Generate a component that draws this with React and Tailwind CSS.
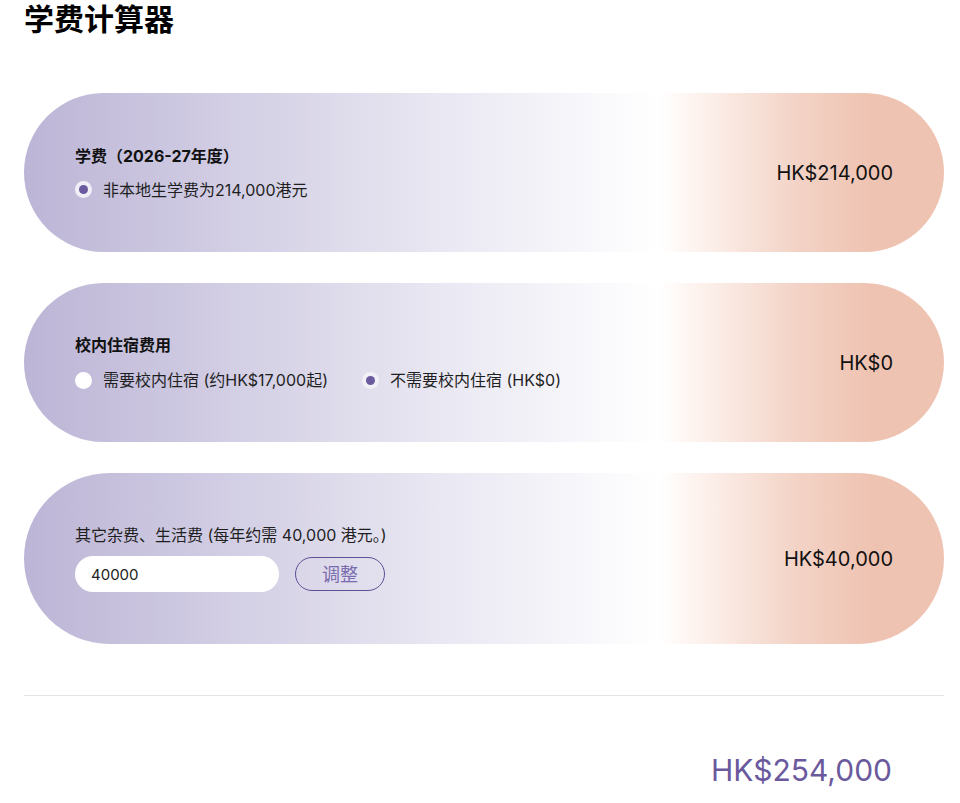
import React, { useState } from 'react';

const FONT = "font-['Inter','Noto_Sans_CJK_SC',sans-serif]";

// Card background: lavender -> white -> peach
const CARD =
  'flex items-center justify-between rounded-full px-[51px] bg-[linear-gradient(90deg,#bcb5d6_0%,#e9e7f2_45%,#ffffff_69%,#fdf3ef_73%,#f3d3c6_84%,#efc3b2_92%,#efc3b2_100%)]';

function Radio({ checked, label, onClick }) {
  return (
    <button type="button" onClick={onClick} className="flex items-center gap-[11px] h-5 text-[16px] text-[#1f1f1f]">
      <span
        className={`flex items-center justify-center w-[17px] h-[17px] rounded-full ${
          checked ? 'bg-[#f2f0f7]' : 'bg-white'
        }`}
      >
        {checked && <span className="w-[9px] h-[9px] rounded-full bg-[#6b5b9e]" />}
      </span>
      <span>{label}</span>
    </button>
  );
}

export default function App() {
  const [dorm, setDorm] = useState(false);
  const [other, setOther] = useState('40000');
  const [applied, setApplied] = useState(40000);

  const tuition = 214000;
  const dormFee = dorm ? 17000 : 0;
  const total = tuition + dormFee + applied;
  const fmt = (n) => 'HK$' + n.toLocaleString('en-US');

  return (
    <div className={`${FONT} bg-white min-h-screen pl-6 pr-4 text-[#111]`}>
      <h1 className="text-[30px] leading-[38px] font-bold text-black">学费计算器</h1>

      <div className="mt-[55px] flex flex-col gap-[31px]">
        {/* tuition */}
        <div className={`${CARD} h-[159px]`}>
          <div className="flex flex-col">
            <div className="text-[16px] leading-5 font-bold mb-[14px]">学费（2026-27年度）</div>
            <Radio checked label="非本地生学费为214,000港元" />
          </div>
          <div className="text-[20px] text-[#111]">{fmt(tuition)}</div>
        </div>

        {/* accommodation */}
        <div className={`${CARD} h-[159px]`}>
          <div className="flex flex-col">
            <div className="text-[16px] leading-5 font-bold mb-[15px]">校内住宿费用</div>
            <div className="flex items-center gap-[34px]">
              <Radio checked={dorm} onClick={() => setDorm(true)} label="需要校内住宿 (约HK$17,000起)" />
              <Radio checked={!dorm} onClick={() => setDorm(false)} label="不需要校内住宿 (HK$0)" />
            </div>
          </div>
          <div className="text-[20px] text-[#111]">{fmt(dormFee)}</div>
        </div>

        {/* other */}
        <div className={`${CARD} h-[171px]`}>
          <div className="flex flex-col">
            <div className="text-[16px] leading-5 mb-[11px] text-[#1f1f1f]">其它杂费、生活费 (每年约需 40,000 港元。)</div>
            <div className="flex items-center gap-4">
              <input
                value={other}
                onChange={(e) => setOther(e.target.value)}
                className="w-[204px] h-9 rounded-full bg-white px-4 text-[15px] text-[#222] outline-none"
              />
              <button
                type="button"
                onClick={() => setApplied(Number(other) || 0)}
                className="w-[90px] h-[34px] rounded-full border-[1.5px] border-[#5f5096] text-[18px] text-[#7a6daf]"
              >
                调整
              </button>
            </div>
          </div>
          <div className="text-[20px] text-[#111]">{fmt(applied)}</div>
        </div>
      </div>

      <div className="mt-[51px] border-t border-[#e4e4e4]" />

      <div className="flex justify-end pr-[52px] pt-[54px]">
        <div className="text-[30px] leading-[40px] text-[#6a5a9d]">{fmt(total)}</div>
      </div>
    </div>
  );
}
